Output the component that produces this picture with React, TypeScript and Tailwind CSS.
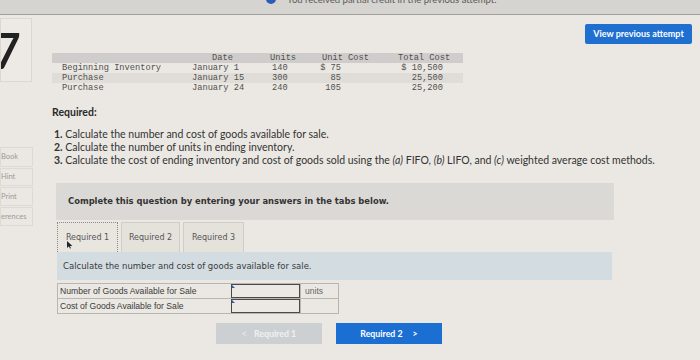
const mono = { fontFamily: '"Liberation Mono", "DejaVu Sans Mono", monospace' };

function DataTable() {
  const rows = [
    ["Beginning Inventory", "January 1", "140", "$ 75", "$ 10,500"],
    ["Purchase", "January 15", "300", "85", "25,500"],
    ["Purchase", "January 24", "240", "105", "25,200"],
  ];
  return (
    <div className="ml-[18px] w-[411px] font-['Liberation_Mono',monospace] text-[8.7px] text-[#505050]">
      <div className="grid h-[10px] grid-cols-[140px_63px_50px_80px_78px] items-center bg-[#cfcdcb] leading-[10px]">
        <span />
        <span className="pl-[20px]">Date</span>
        <span className="pl-[15px]">Units</span>
        <span className="pl-[17px]">Unit Cost</span>
        <span className="pl-[13px]">Total Cost</span>
      </div>
      {rows.map((r, i) => (
        <div
          key={i}
          className={
            "grid h-[10px] grid-cols-[140px_63px_50px_80px_78px] items-center leading-[10px] " +
            (i === 1 ? "bg-[#e0ddd8]" : "")
          }
        >
          <span className="pl-[10px]">{r[0]}</span>
          <span>{r[1]}</span>
          <span className="pl-[17px]">{r[2]}</span>
          <span className="pr-[44px] text-right">{r[3]}</span>
          <span className="pr-[20px] text-right">{r[4]}</span>
        </div>
      ))}
    </div>
  );
}

export default function App() {
  return (
    <div className="relative h-[360px] w-[700px] overflow-hidden bg-[#ebe8e3] font-['Lato',sans-serif]">
      {/* top status strip */}
      <div className="relative h-[15px] border-b border-[#a19f9b] bg-[#d6d4d0]">
        <div className="absolute left-[266px] top-[-6px] h-[10px] w-[10px] rounded-full bg-[#2b5cb8]" />
        <div className="absolute left-[287px] top-[-6px] text-[9.5px] leading-[12px] text-[#5a5a5a]">
          You received partial credit in the previous attempt.
        </div>
      </div>

      <div className="flex">
        {/* left rail */}
        <div className="flex w-[34px] flex-col">
          <div className="mt-[3px] flex h-[64px] w-[32px] items-start justify-end overflow-hidden border border-[#dbd8d2] bg-[#edeae5]">
            <span className="mt-[6px] mr-[10px] text-[50px] leading-[50px] font-semibold text-[#222]">7</span>
          </div>
          <div className="mt-[65px] flex flex-col gap-[1px] text-[7.5px] text-[#9a9a9a]">
            <div className="flex h-[20px] w-[33px] items-center border border-[#dddad4]">Book</div>
            <div className="flex h-[18px] w-[33px] items-center border border-[#dddad4]">Hint</div>
            <div className="flex h-[19px] w-[33px] items-center border border-[#dddad4]">Print</div>
            <div className="flex h-[19px] w-[33px] items-center border border-[#dddad4]">erences</div>
          </div>
        </div>

        {/* main column */}
        <div className="flex flex-1 flex-col">
          <div className="flex justify-end pr-[8px] pt-[9px]">
            <div className="flex h-[20px] w-[107px] items-center justify-center rounded-[2px] bg-[#1f6fd1] text-[9px] font-bold text-white">
              View previous attempt
            </div>
          </div>

          <div className="mt-[9px]">
            <DataTable />
          </div>

          <div className="ml-[18px] mt-[13px] text-[10.5px] leading-[12px] font-bold text-[#2a2a2a]">Required:</div>

          <ol className="ml-[20px] mt-[10px] text-[10.5px] leading-[13px] text-[#333]">
            <li>
              <span className="font-bold">1.</span> Calculate the number and cost of goods available for sale.
            </li>
            <li>
              <span className="font-bold">2.</span> Calculate the number of units in ending inventory.
            </li>
            <li>
              <span className="font-bold">3.</span> Calculate the cost of ending inventory and cost of goods sold using the{" "}
              <i>(a)</i> FIFO, <i>(b)</i> LIFO, and <i>(c)</i> weighted average cost methods.
            </li>
          </ol>

          <div className="ml-[22px] mt-[16px] flex h-[37px] w-[558px] items-center bg-[#dbd9d5] pl-[12px] font-['DejaVu_Sans',sans-serif] text-[8.4px] font-bold text-[#333]">
            Complete this question by entering your answers in the tabs below.
          </div>

          <div className="ml-[23px] mt-[2px] flex gap-[3px] font-['DejaVu_Sans',sans-serif] text-[8px] text-[#555]">
            <div className="relative flex h-[30px] w-[61px] items-center justify-center border border-dotted border-[#8a8a8a] border-b-0 bg-[#e9e6e0]">
              Required 1
              <svg className="absolute left-[9px] top-[18px]" width="6" height="8" viewBox="0 0 6 8">
                <path d="M0 0 L0 7 L1.8 5.2 L3 7.6 L4 7.2 L2.9 4.9 L5.4 4.9 Z" fill="#222" />
              </svg>
            </div>
            <div className="flex h-[30px] w-[59px] items-center justify-center border border-b-0 border-[#d0cdc7] bg-[#e5e2dc]">
              Required 2
            </div>
            <div className="flex h-[30px] w-[61px] items-center justify-center border border-b-0 border-[#d0cdc7] bg-[#e5e2dc]">
              Required 3
            </div>
          </div>

          <div className="ml-[23px] flex h-[28px] w-[555px] items-center bg-[#d3dce0] pl-[6px] font-['DejaVu_Sans',sans-serif] text-[8.5px] text-[#3a3a3a]">
            Calculate the number and cost of goods available for sale.
          </div>

          <div className="ml-[23px] mt-[3px] w-[282px] border border-[#b9b6b0] font-['Liberation_Sans',sans-serif] text-[8.6px] text-[#3a3a3a]">
            <div className="grid h-[15px] grid-cols-[173px_69px_1fr] border-b border-[#b9b6b0]">
              <div className="flex items-center pl-[2px]">Number of Goods Available for Sale</div>
              <div className="relative border border-[#4a4a4a] bg-[#ece9e4]">
                <div className="absolute left-0 top-0 h-0 w-0 border-l-[3px] border-t-[3px] border-l-[#2d5fb0] border-t-transparent" />
              </div>
              <div className="flex items-center border-l border-[#b9b6b0] pl-[4px] text-[#666]">units</div>
            </div>
            <div className="grid h-[14px] grid-cols-[173px_69px_1fr]">
              <div className="flex items-center pl-[2px]">Cost of Goods Available for Sale</div>
              <div className="relative border border-[#4a4a4a] bg-[#ece9e4]">
                <div className="absolute left-0 top-0 h-0 w-0 border-l-[3px] border-t-[3px] border-l-[#2d5fb0] border-t-transparent" />
              </div>
              <div className="border-l border-[#b9b6b0]" />
            </div>
          </div>

          <div className="ml-[182px] mt-[9px] flex gap-[14px] text-[8.8px] font-bold">
            <div className="flex h-[21px] w-[106px] items-center justify-center gap-[7px] bg-[#ccd0d2] text-[#eef1f3]">
              <span className="font-normal">&lt;</span>
              <span>Required 1</span>
            </div>
            <div className="flex h-[21px] w-[106px] items-center justify-center gap-[10px] bg-[#1b6fd2] text-white">
              <span>Required 2</span>
              <span>&gt;</span>
            </div>
          </div>
        </div>
      </div>
    </div>
  );
}
